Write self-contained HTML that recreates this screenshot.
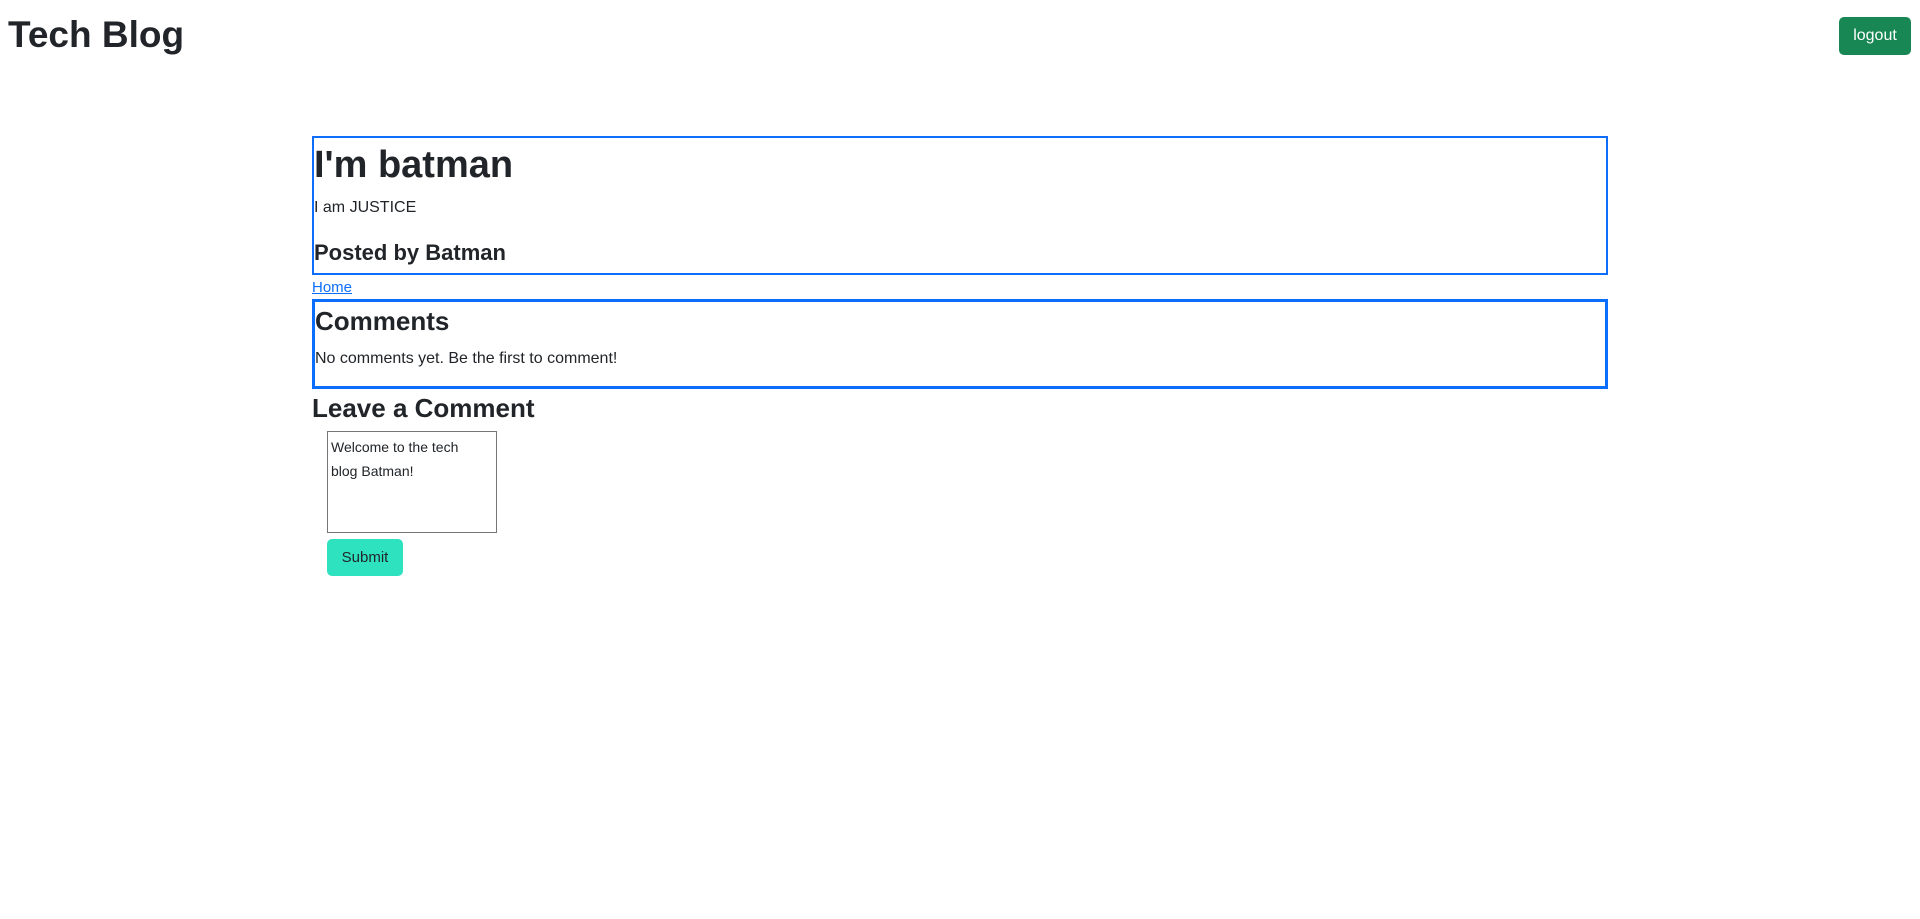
<!DOCTYPE html>
<html><head><style>
body{margin:0;font-family:"Liberation Sans",sans-serif;color:#212529;background:#fff;width:1920px;height:919px;position:relative;overflow:hidden}
.a{position:absolute;margin:0;white-space:nowrap}
.b{font-weight:bold}
</style></head><body>
<h1 class="a b" style="left:8px;top:11px;font-size:37px;line-height:48px">Tech Blog</h1>
<div class="a" style="left:1839px;top:17px;width:72px;height:38px;background:#198754;color:#fff;border-radius:5px;font-size:16px;line-height:38px;text-align:center">logout</div>
<div class="a" style="left:312px;top:136px;width:1296px;height:139px;border:2px solid #0d6efd;box-sizing:border-box"></div>
<div class="a b" style="left:314px;top:141px;font-size:38px;line-height:48px">I'm batman</div>
<div class="a" style="left:314px;top:198px;font-size:16px;line-height:20px">I am JUSTICE</div>
<div class="a b" style="left:314px;top:239px;font-size:22px;line-height:28px">Posted by Batman</div>
<div class="a" style="left:312px;top:279px;font-size:15px;line-height:18px;color:#0d6efd;text-decoration:underline">Home</div>
<div class="a" style="left:312px;top:299px;width:1296px;height:90px;border:3px solid #0d6efd;box-sizing:border-box"></div>
<div class="a b" style="left:315px;top:304px;font-size:26px;line-height:34px">Comments</div>
<div class="a" style="left:315px;top:349px;font-size:16px;line-height:20px">No comments yet. Be the first to comment!</div>
<div class="a b" style="left:312px;top:391px;font-size:26px;line-height:34px">Leave a Comment</div>
<div class="a" style="left:327px;top:431px;width:170px;height:102px;border:1px solid #767676;box-sizing:border-box;padding:3px 20px 3px 3px;font-size:14px;line-height:24px;white-space:normal">Welcome to the tech blog Batman!</div>
<div class="a" style="left:327px;top:539px;width:76px;height:37px;background:#2ee2c0;border-radius:5px;font-size:15px;line-height:37px;text-align:center">Submit</div>
</body></html>
